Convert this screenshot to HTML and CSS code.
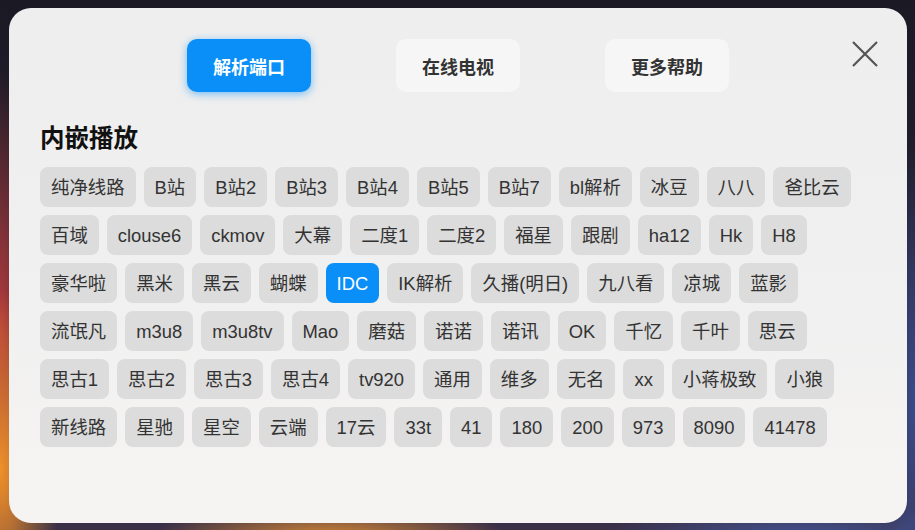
FILE: index.html
```html
<!DOCTYPE html>
<html lang="zh">
<head>
<meta charset="utf-8">
<link rel="stylesheet" href="styles.css">
</head>
<body>
<div class="backdrop">
  <div class="card">
    <button class="close" aria-label="关闭">
      <svg width="26" height="26" viewBox="0 0 26 26"><path d="M1 1 L25 25 M25 1 L1 25" stroke="#555" stroke-width="2.2" fill="none"/></svg>
    </button>
    <nav class="tabs">
      <div class="tab active">解析端口</div>
      <div class="tab">在线电视</div>
      <div class="tab">更多帮助</div>
    </nav>
    <h2 class="title">内嵌播放</h2>
    <div class="chips">
      <div class="row"><span class="chip">纯净线路</span><span class="chip">B站</span><span class="chip">B站2</span><span class="chip">B站3</span><span class="chip">B站4</span><span class="chip">B站5</span><span class="chip">B站7</span><span class="chip">bl解析</span><span class="chip">冰豆</span><span class="chip">八八</span><span class="chip">爸比云</span></div>
      <div class="row"><span class="chip">百域</span><span class="chip">clouse6</span><span class="chip">ckmov</span><span class="chip">大幕</span><span class="chip">二度1</span><span class="chip">二度2</span><span class="chip">福星</span><span class="chip">跟剧</span><span class="chip">ha12</span><span class="chip">Hk</span><span class="chip">H8</span></div>
      <div class="row"><span class="chip">豪华啦</span><span class="chip">黑米</span><span class="chip">黑云</span><span class="chip">蝴蝶</span><span class="chip selected">IDC</span><span class="chip">IK解析</span><span class="chip">久播(明日)</span><span class="chip">九八看</span><span class="chip">凉城</span><span class="chip">蓝影</span></div>
      <div class="row"><span class="chip">流氓凡</span><span class="chip">m3u8</span><span class="chip">m3u8tv</span><span class="chip">Mao</span><span class="chip">磨菇</span><span class="chip">诺诺</span><span class="chip">诺讯</span><span class="chip">OK</span><span class="chip">千忆</span><span class="chip">千叶</span><span class="chip">思云</span></div>
      <div class="row"><span class="chip">思古1</span><span class="chip">思古2</span><span class="chip">思古3</span><span class="chip">思古4</span><span class="chip">tv920</span><span class="chip">通用</span><span class="chip">维多</span><span class="chip">无名</span><span class="chip">xx</span><span class="chip">小蒋极致</span><span class="chip">小狼</span></div>
      <div class="row"><span class="chip">新线路</span><span class="chip">星驰</span><span class="chip">星空</span><span class="chip">云端</span><span class="chip">17云</span><span class="chip">33t</span><span class="chip">41</span><span class="chip">180</span><span class="chip">200</span><span class="chip">973</span><span class="chip">8090</span><span class="chip">41478</span></div>
    </div>
  </div>
</div>
</body>
</html>
```
FILE: styles.css
```css
* { box-sizing: border-box; }
html, body {
  margin: 0;
  padding: 0;
  width: 915px;
  height: 530px;
  overflow: hidden;
  font-family: "Noto Sans CJK SC", "Noto Sans", sans-serif;
}
.backdrop {
  width: 915px;
  height: 530px;
  padding: 8px 8px 7px 9px;
  background:
    radial-gradient(ellipse 60px 180px at 0px 470px, rgba(245,150,40,0.95), rgba(245,150,40,0) 100%),
    radial-gradient(ellipse 180px 40px at 330px 540px, rgba(240,150,50,0.9), rgba(240,150,50,0) 100%),
    radial-gradient(ellipse 40px 260px at 0px 330px, rgba(190,60,60,0.95), rgba(190,60,60,0) 100%),
    radial-gradient(ellipse 200px 40px at 800px 540px, rgba(70,90,160,0.9), rgba(70,90,160,0) 100%),
    radial-gradient(ellipse 30px 260px at 915px 400px, rgba(60,80,150,0.9), rgba(60,80,150,0) 100%),
    linear-gradient(180deg, #1a1924 0%, #221f2e 40%, #3a3048 100%);
}
.card {
  position: relative;
  width: 898px;
  height: 515px;
  border-radius: 22px;
  background: linear-gradient(180deg, #eeeeee 0%, #f0f0f0 50%, #f6f4f3 100%);
  padding: 31px 31px 0 31px;
}
.close {
  position: absolute;
  top: 33px;
  right: 29px;
  width: 26px;
  height: 26px;
  padding: 0;
  border: 0;
  background: none;
  display: flex;
}
.tabs {
  display: flex;
  justify-content: center;
  gap: 85px;
  height: 53px;
}
.tab {
  width: 124px;
  height: 53px;
  border-radius: 10px;
  background: #f6f6f6;
  color: #333;
  font-size: 18px;
  font-weight: 700;
  display: flex;
  align-items: center;
  justify-content: center;
}
.tab.active {
  background: #0a8ff8;
  color: #fff;
  box-shadow: 0 2px 8px rgba(10,143,248,0.55);
}
.title {
  margin: 29px 0 14px 0;
  font-size: 24.5px;
  line-height: 32px;
  font-weight: 700;
  color: #111;
}
.chips {
  display: flex;
  flex-direction: column;
  gap: 8px;
}
.row {
  display: flex;
  gap: 8px;
}
.chip {
  height: 40px;
  padding: 0 11px;
  border-radius: 8px;
  background: #dcdcdc;
  color: #333;
  font-family: "Liberation Sans", "Noto Sans CJK SC", sans-serif;
  font-size: 18.4px;
  line-height: 41px;
  white-space: nowrap;
}
.chip.selected {
  background: #0a8ff8;
  color: #fff;
}
```
